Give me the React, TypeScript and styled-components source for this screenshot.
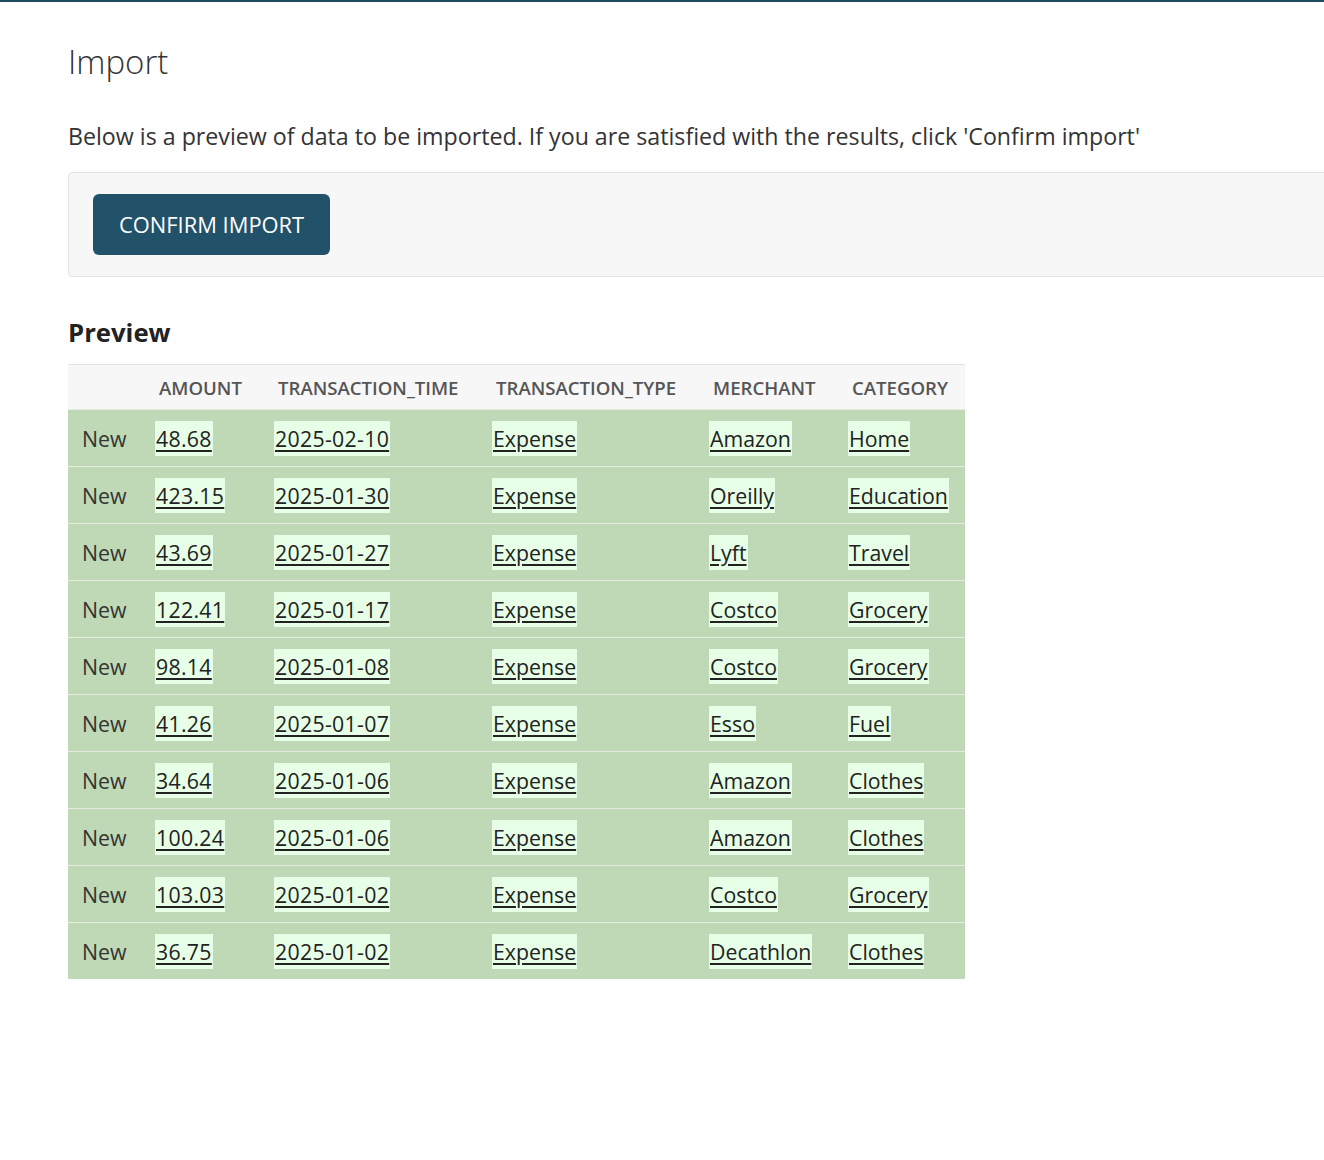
import React from "react";
import styled, { createGlobalStyle } from "styled-components";

const Global = createGlobalStyle`
  html, body { margin: 0; padding: 0; background: #fff; overflow-x: hidden; }
  body { font-family: "Open Sans", "Noto Sans", sans-serif; color: #333; }
`;

const TopBar = styled.div`
  height: 2px;
  background: #1f4b5e;
`;

const Main = styled.main`
  padding: 0 0 0 68px;
  width: 1280px;
`;

const Title = styled.h1`
  margin: 38px 0 0;
  font-size: 33px;
  font-weight: 300;
  line-height: 44px;
  color: #333;
`;

const Lead = styled.p`
  margin: 37px 0 0;
  font-size: 23.2px;
  line-height: 30px;
`;

const Well = styled.div`
  margin-top: 21px;
  background: #f7f7f7;
  border: 1px solid #e3e3e3;
  border-radius: 4px;
  padding: 21px 24px;
`;

const Button = styled.button`
  display: inline-block;
  background: #22516a;
  color: #fff;
  border: none;
  border-radius: 6px;
  height: 61px;
  padding: 0 26px;
  font-family: inherit;
  font-size: 21.9px;
  text-transform: uppercase;
  cursor: pointer;
`;

const Subtitle = styled.h2`
  margin: 39px 0 14px;
  font-size: 25.7px;
  font-weight: 700;
  line-height: 34px;
  color: #222;
`;

const Table = styled.table`
  border-collapse: collapse;
  table-layout: fixed;
  width: 897px;
`;

const HeadRow = styled.tr`
  background: #f7f7f7;
  border-top: 1px solid #e3e3e3;
`;

const Th = styled.th`
  text-align: left;
  padding: 0 0 0 14px;
  height: 44px;
  font-size: 18.6px;
  font-weight: 600;
  color: #555;
  text-transform: uppercase;
  white-space: nowrap;
`;

const Row = styled.tr`
  background: #bfd8b5;
  border-top: 1px solid #e6ece2;
`;

const Td = styled.td<{ $status?: boolean }>`
  padding: 0 0 0 ${(p) => (p.$status ? 14 : 10)}px;
  height: 56px;
  font-size: 21.3px;
  color: #333;
  white-space: nowrap;
`;

const Cell = styled.span<{ $numeric?: boolean }>`
  background: #e6ffe6;
  color: #222;
  text-decoration: underline;
  text-decoration-thickness: 2px;
  text-underline-offset: 3px;
  padding: 3px 1px;
  letter-spacing: ${(p) => (p.$numeric ? "0.3px" : "0")};
`;

const widths = [77, 119, 218, 217, 139, 127];
const headers = ["", "Amount", "Transaction_time", "Transaction_type", "Merchant", "Category"];

const rows: [string, string, string, string, string][] = [
  ["48.68", "2025-02-10", "Expense", "Amazon", "Home"],
  ["423.15", "2025-01-30", "Expense", "Oreilly", "Education"],
  ["43.69", "2025-01-27", "Expense", "Lyft", "Travel"],
  ["122.41", "2025-01-17", "Expense", "Costco", "Grocery"],
  ["98.14", "2025-01-08", "Expense", "Costco", "Grocery"],
  ["41.26", "2025-01-07", "Expense", "Esso", "Fuel"],
  ["34.64", "2025-01-06", "Expense", "Amazon", "Clothes"],
  ["100.24", "2025-01-06", "Expense", "Amazon", "Clothes"],
  ["103.03", "2025-01-02", "Expense", "Costco", "Grocery"],
  ["36.75", "2025-01-02", "Expense", "Decathlon", "Clothes"],
];

export default function App() {
  return (
    <>
      <Global />
      <TopBar />
      <Main>
        <Title>Import</Title>
        <Lead>
          Below is a preview of data to be imported. If you are satisfied with the results, click 'Confirm import'
        </Lead>
        <Well>
          <Button>Confirm import</Button>
        </Well>
        <Subtitle>Preview</Subtitle>
        <Table>
          <colgroup>
            {widths.map((w, i) => (
              <col key={i} style={{ width: w }} />
            ))}
          </colgroup>
          <thead>
            <HeadRow>
              {headers.map((h, i) => (
                <Th key={i}>{h}</Th>
              ))}
            </HeadRow>
          </thead>
          <tbody>
            {rows.map((r, i) => (
              <Row key={i}>
                <Td $status>New</Td>
                {r.map((c, j) => (
                  <Td key={j}>
                    <Cell $numeric={j < 2}>{c}</Cell>
                  </Td>
                ))}
              </Row>
            ))}
          </tbody>
        </Table>
      </Main>
    </>
  );
}
